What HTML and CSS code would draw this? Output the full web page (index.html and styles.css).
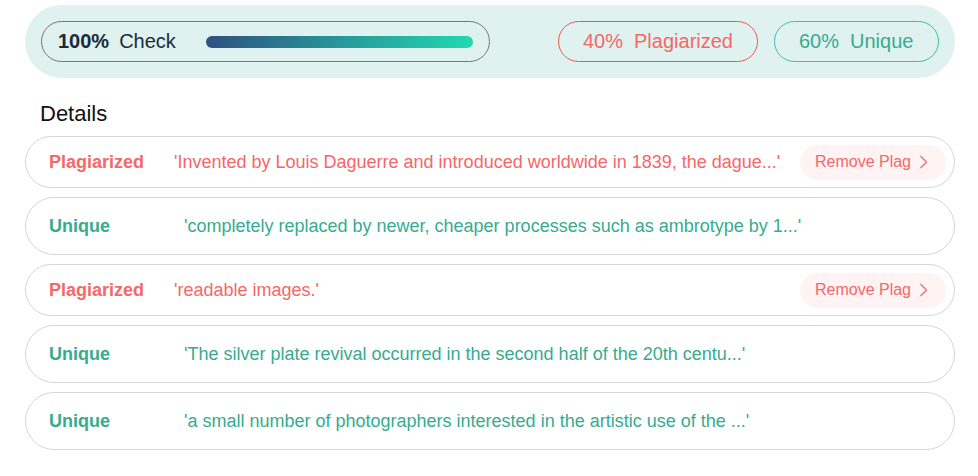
FILE: index.html
```html
<!DOCTYPE html>
<html lang="en">

<head>
    <meta charset="UTF-8">
    <title>Plagiarism Check</title>
    <link rel="stylesheet" href="styles.css">
</head>

<body>
    <div class="page">
        <div class="summary">
            <div class="checkPill">
                <span class="percent">100%</span>
                <span>Check</span>
                <div class="bar"></div>
            </div>
            <div class="statPill plag"><span class="num">40%</span>Plagiarized</div>
            <div class="statPill unique"><span class="num">60%</span>Unique</div>
        </div>
        <h2 class="title">Details</h2>
        <div class="row plag">
            <span class="label">Plagiarized</span>
            <span class="quote">'Invented by Louis Daguerre and introduced worldwide in 1839, the dague...'</span>
            <button class="removeBtn">Remove Plag
                <svg width="9" height="14" viewBox="0 0 9 14"><path d="M1.5 1l6 6-6 6" fill="none" stroke="currentColor" stroke-width="1.2"/></svg>
            </button>
        </div>
        <div class="row unique">
            <span class="label">Unique</span>
            <span class="quote">'completely replaced by newer, cheaper processes such as ambrotype by 1...'</span>
        </div>
        <div class="row plag">
            <span class="label">Plagiarized</span>
            <span class="quote">'readable images.'</span>
            <button class="removeBtn">Remove Plag
                <svg width="9" height="14" viewBox="0 0 9 14"><path d="M1.5 1l6 6-6 6" fill="none" stroke="currentColor" stroke-width="1.2"/></svg>
            </button>
        </div>
        <div class="row unique">
            <span class="label">Unique</span>
            <span class="quote">'The silver plate revival occurred in the second half of the 20th centu...'</span>
        </div>
        <div class="row unique">
            <span class="label">Unique</span>
            <span class="quote">'a small number of photographers interested in the artistic use of the ...'</span>
        </div>
    </div>
</body>

</html>
```

FILE: styles.css
```css
:root {
    --font: "Liberation Sans", Arial, sans-serif;
    --text: #1a2a3a;
    --mint: #dff2ef;
    --red: #f4676a;
    --redBorder: #ee5a4f;
    --teal: #37ab8f;
    --tealBorder: #3dbfa6;
    --line: #d6d6d6;
}

body {
    margin: 0;
    font-family: var(--font);
    background-color: #fff;
}

.page {
    padding: 5px 23px 0 25px;
}

.summary {
    display: flex;
    align-items: center;
    gap: 16px;
    height: 73px;
    box-sizing: border-box;
    padding: 16px;
    border-radius: 37px;
    background-color: var(--mint);
}

.checkPill {
    display: flex;
    align-items: center;
    width: 449px;
    height: 41px;
    box-sizing: border-box;
    padding: 0 16px;
    border: 1px solid #777;
    border-radius: 21px;
    font-size: 20px;
    color: var(--text);
}

.percent {
    font-weight: bold;
    margin-right: 10px;
}

.bar {
    flex: 1;
    height: 12px;
    margin-left: 30px;
    border-radius: 6px;
    background: linear-gradient(90deg, #2f5080, #27979a 50%, #22d8b0);
}

.statPill {
    display: flex;
    align-items: center;
    height: 41px;
    box-sizing: border-box;
    padding: 0 24px;
    border: 1px solid;
    border-radius: 21px;
    font-size: 20px;
}

.statPill.plag {
    margin-left: auto;
    width: 200px;
    color: var(--red);
    border-color: var(--redBorder);
}

.statPill.unique {
    width: 165px;
    color: var(--teal);
    border-color: var(--tealBorder);
}

.num {
    margin-right: 11px;
}

.title {
    margin: 23px 0 9px 15px;
    font-size: 22px;
    line-height: 26px;
    font-weight: normal;
    color: #111;
}

.row {
    display: flex;
    align-items: center;
    height: 52px;
    box-sizing: border-box;
    margin-bottom: 9px;
    padding: 0 8px 0 23px;
    border: 1px solid var(--line);
    border-radius: 29px;
    font-size: 18px;
}

.row.unique {
    height: 58px;
    color: var(--teal);
}

.row.plag {
    color: var(--red);
}

.label {
    font-weight: bold;
    width: 125px;
    flex-shrink: 0;
}

.row.unique .label {
    width: 135px;
}

.quote {
    white-space: nowrap;
}

.removeBtn {
    display: flex;
    align-items: center;
    gap: 8px;
    margin-left: auto;
    height: 35px;
    padding: 0 18px 0 15px;
    border: none;
    border-radius: 18px;
    background-color: #fff4f3;
    color: var(--red);
    font-family: var(--font);
    font-size: 16px;
}
```
